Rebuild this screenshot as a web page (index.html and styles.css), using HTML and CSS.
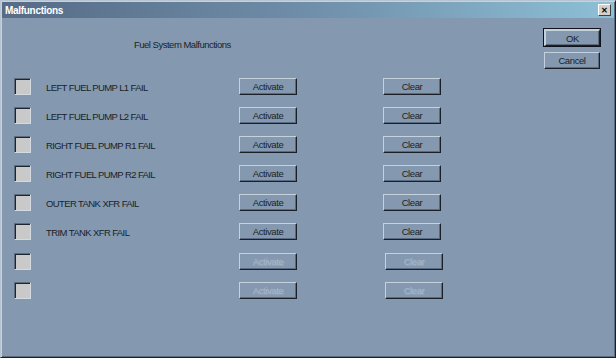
FILE: index.html
```html
<!DOCTYPE html>
<html lang="en">
<head>
    <meta charset="UTF-8">
    <title>Malfunctions</title>
    <link rel="stylesheet" href="styles.css">
</head>
<body>
    <div class="window">
        <div class="titlebar">
            <span class="title">Malfunctions</span>
            <span class="close">&#x2715;</span>
        </div>
        <div class="content">
            <div class="main">
                <div class="heading">Fuel System Malfunctions</div>
                <div class="rows">
                    <div class="row">
                        <span class="check"></span>
                        <span class="label">LEFT FUEL PUMP L1 FAIL</span>
                        <button class="btn">Activate</button>
                        <button class="btn">Clear</button>
                    </div>
                    <div class="row">
                        <span class="check"></span>
                        <span class="label">LEFT FUEL PUMP L2 FAIL</span>
                        <button class="btn">Activate</button>
                        <button class="btn">Clear</button>
                    </div>
                    <div class="row">
                        <span class="check"></span>
                        <span class="label">RIGHT FUEL PUMP R1 FAIL</span>
                        <button class="btn">Activate</button>
                        <button class="btn">Clear</button>
                    </div>
                    <div class="row">
                        <span class="check"></span>
                        <span class="label">RIGHT FUEL PUMP R2 FAIL</span>
                        <button class="btn">Activate</button>
                        <button class="btn">Clear</button>
                    </div>
                    <div class="row">
                        <span class="check"></span>
                        <span class="label">OUTER TANK XFR FAIL</span>
                        <button class="btn">Activate</button>
                        <button class="btn">Clear</button>
                    </div>
                    <div class="row">
                        <span class="check"></span>
                        <span class="label">TRIM TANK XFR FAIL</span>
                        <button class="btn">Activate</button>
                        <button class="btn">Clear</button>
                    </div>
                    <div class="row empty first-empty">
                        <span class="check"></span>
                        <span class="label"></span>
                        <button class="btn" disabled>Activate</button>
                        <button class="btn" disabled>Clear</button>
                    </div>
                    <div class="row empty">
                        <span class="check"></span>
                        <span class="label"></span>
                        <button class="btn" disabled>Activate</button>
                        <button class="btn" disabled>Clear</button>
                    </div>
                </div>
            </div>
            <div class="side">
                <button class="btn default">OK</button>
                <button class="btn">Cancel</button>
            </div>
        </div>
    </div>
</body>
</html>
```

FILE: styles.css
```css
body {
    margin: 0;
    background: #8499b0;
    font-family: "Liberation Sans", Arial, sans-serif;
    color: #1a1f28;
}

.window {
    width: 616px;
    height: 358px;
    box-sizing: border-box;
    display: flex;
    flex-direction: column;
    background: #8499b0;
    border: 1px solid;
    border-color: #b8c4d2 #1a1f28 #1a1f28 #b8c4d2;
    box-shadow: inset 1px 1px 0 #c8d2de, inset -1px -1px 0 #5c6c80;
    padding: 1px;
}

.titlebar {
    height: 16px;
    display: flex;
    align-items: center;
    justify-content: space-between;
    padding: 0 3px 0 3px;
    background: linear-gradient(to right, #566b85, #6f8ea9 50%, #8dc0d6);
}

.title {
    color: #fff;
    font-weight: bold;
    font-size: 10px;
    letter-spacing: -0.3px;
}

.close {
    width: 13px;
    height: 12px;
    box-sizing: border-box;
    display: flex;
    align-items: center;
    justify-content: center;
    background: #d4d0c8;
    border: 1px solid;
    border-color: #fff #404040 #404040 #fff;
    font-size: 8px;
    font-weight: bold;
    color: #000;
}

.content {
    flex: 1;
    display: flex;
    padding-left: 12px;
}

.main {
    flex: 1;
}

.heading {
    margin-top: 21px;
    padding-left: 120px;
    font-size: 9.5px;
    letter-spacing: -0.5px;
    height: 10px;
}

.rows {
    margin-top: 29px;
    display: flex;
    flex-direction: column;
    gap: 12px;
}

.row {
    display: grid;
    grid-template-columns: 32px 193px 144px 58px;
    align-items: center;
    height: 17px;
}

.row.first-empty {
    margin-top: 1px;
}

.row.empty .btn:last-child {
    margin-left: 2px;
}

.check {
    width: 17px;
    height: 17px;
    box-sizing: border-box;
    background: #c9c9c9;
    border: 1px solid;
    border-color: #5d6b7d #d2dae4 #d2dae4 #5d6b7d;
    box-shadow: inset 1px 1px 0 #1e2530;
}

.label {
    font-size: 9.5px;
    letter-spacing: -0.6px;
    padding-top: 1px;
}

.btn {
    width: 58px;
    height: 17px;
    padding: 0;
    box-sizing: border-box;
    background: #8499b0;
    border: 1px solid;
    border-color: #c6d1de #1a1f28 #1a1f28 #c6d1de;
    box-shadow: inset -1px -1px 0 #5a6a80;
    font-family: "Liberation Sans", Arial, sans-serif;
    font-size: 9.5px;
    letter-spacing: -0.4px;
    color: #1a1f28;
}

.btn:disabled {
    color: #a8b8ca;
    text-shadow: 1px 1px 0 #93a6bb;
}

.side {
    display: flex;
    flex-direction: column;
    gap: 6px;
    padding: 11px 14px 0 0;
}

.side .btn {
    width: 56px;
    height: 17px;
}

.side .btn.default {
    outline: 1px solid #10141a;
    outline-offset: 0;
    border-width: 2px 1px 1px 2px;
}
```
